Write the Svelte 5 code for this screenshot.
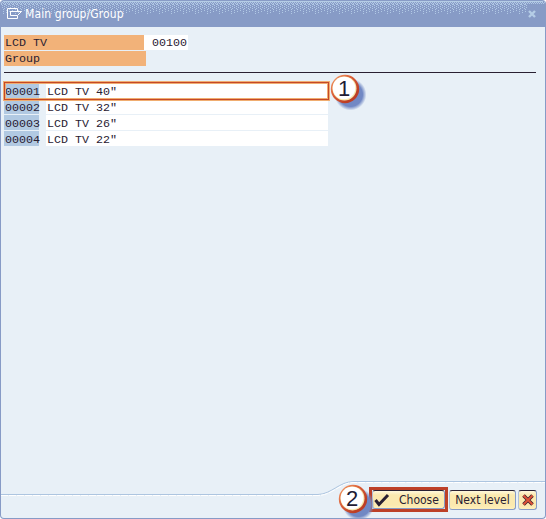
<script>
  const rows = [
    ['00001', 'LCD TV 40"'],
    ['00002', 'LCD TV 32"'],
    ['00003', 'LCD TV 26"'],
    ['00004', 'LCD TV 22"']
  ];
  // Ordered-dither texture of the title bar: [y, step, offset]
  const dither = [[2,2,0],[3,2,1],[4,4,0],[4,4,1],[5,4,2],[6,4,0],[7,4,2],[8,4,0],[9,6,3],[10,6,0],[11,6,3],[12,12,6],[13,12,3]];
  let dots = '';
  for (const [y, step, off] of dither) {
    for (let x = off; x < 12; x += step) dots += `M${x} ${y}h1v1h-1z`;
  }
</script>

{#snippet badge(n)}
  <svg width="38" height="38" viewBox="0 0 38 38">
    <defs>
      <radialGradient id="shade{n}">
        <stop offset=".75" stop-color="#7188c4" /><stop offset="1" stop-color="#7188c4" stop-opacity="0" />
      </radialGradient>
      <linearGradient id="rim{n}" x1="0" y1="0" x2="1" y2="1">
        <stop offset="0" stop-color="#f5ac78" /><stop offset=".35" stop-color="#de643c" /><stop offset=".75" stop-color="#bd3e25" />
      </linearGradient>
    </defs>
    <circle cx="20.5" cy="20.5" r="16" fill="url(#shade{n})" />
    <circle cx="15" cy="15" r="14.2" fill="url(#rim{n})" />
    <circle cx="14.5" cy="14.5" r="12" fill="#f8e8ad" />
    <circle cx="14" cy="14" r="11.3" fill="#fff" />
    <text x="14" y="22" text-anchor="middle">{n}</text>
  </svg>
{/snippet}

<main>
  <header>
    <svg class="texture" width="546" height="27">
      <defs><pattern id="dither" width="12" height="27" patternUnits="userSpaceOnUse"><path d={dots} fill="#b1c9e5" shape-rendering="crispEdges" /></pattern></defs>
      <rect width="528" height="27" fill="url(#dither)" />
      <rect x="528" width="18" height="4" fill="url(#dither)" />
      <path d="M3 1.5H543" stroke="#b5cde6" />
    </svg>
    <svg class="exit" width="15" height="12" viewBox="0 0 15 12" fill="none" stroke="#fff">
      <path d="M10.5 3V.5H.5V10.5H10.5V8M3 3.5H14.5L10.5 7.5H3.5V3.5" />
    </svg>
    <h1>Main group/Group</h1>
    <svg class="close" width="8" height="8" viewBox="0 0 8 8"><path d="M1 1L7 7M7 1L1 7" stroke="#b5cde6" stroke-width="2.4" /></svg>
  </header>
  <section class="info">
    <div class="line"><span class="label">LCD TV</span><span class="value">00100</span></div>
    <div class="line"><span class="label wide">Group</span></div>
  </section>
  <hr />
  <section class="list">
    {#each rows as [code, name]}
      <div class="row"><span class="code">{code}</span><span class="name">{name}</span></div>
    {/each}
    <div class="selected"></div>
    <div class="badge one">{@render badge(1)}</div>
  </section>
  <footer>
    <svg class="curve" width="544" height="18" viewBox="1 479 544 18" fill="none">
      <path d="M1 494.5H318C332 494 339 481.5 354 481.5H545" stroke="#adc5e0" />
      <path d="M1 495.5H318C333 495 340 482.5 354 482.5H545" stroke="#fff" stroke-dasharray="7 1" />
    </svg>
    <div class="buttons">
      <div class="frame"><button class="choose"><svg width="16" height="14" viewBox="0 0 16 14"><path d="M1.5 7L5 11.5L14 2" fill="none" stroke="#292032" stroke-width="3" /></svg><span>Choose</span></button></div>
      <button class="next">Next level</button>
      <button class="cancel" aria-label="Cancel"><svg width="12" height="12" viewBox="0 0 12 12"><path d="M1.5 1.5L10.5 10.5M10.5 1.5L1.5 10.5" stroke="#42202c" stroke-width="3.6" /><path d="M1.5 1.5L10.5 10.5M10.5 1.5L1.5 10.5" stroke="#df5438" stroke-width="2" /></svg></button>
      <div class="badge two">{@render badge(2)}</div>
    </div>
  </footer>
</main>

<style>
  main { position: relative; box-sizing: border-box; width: 546px; height: 519px; display: flex; flex-direction: column; background: #e8f0f7; border: solid #879bc6; border-width: 0 1px 1px; border-radius: 4px; overflow: hidden; color: #292032; font-family: "DejaVu Sans Condensed", "DejaVu Sans", sans-serif; }
  header { position: relative; height: 27px; flex: none; background: #879bc6; display: flex; align-items: center; padding: 0 9px 0 6px; }
  .texture { position: absolute; left: -1px; top: 0; }
  .exit, h1, .close { position: relative; }
  h1 { margin: 0 auto 0 3px; font: 12px/16px "DejaVu Sans Condensed", sans-serif; color: #fff; white-space: nowrap; letter-spacing: .1px; }
  .info { padding: 8px 0 0 3px; }
  .line { display: flex; height: 15px; margin-bottom: 1px; }
  .line, .row { font: 11.67px/17px "Liberation Mono", monospace; white-space: pre; }
  .row { line-height: 18px; }
  .label { width: 140px; background: #f2b279; box-sizing: border-box; padding-left: 1px; }
  .wide { width: 142px; }
  .value { width: 44px; box-sizing: border-box; padding-left: 8px; background: #fff; }
  hr { width: 532px; height: 1px; flex: none; border: 0; background: #292032; margin: 5px 0 10px 3px; }
  .list { position: relative; padding-left: 3px; }
  .row { display: flex; gap: 7px; height: 15px; margin-bottom: 1px; }
  .code { width: 35px; box-sizing: border-box; padding-left: 1px; background: #b1c9e2; }
  .name { width: 282px; box-sizing: border-box; padding-left: 1px; background: #fff; }
  .selected { position: absolute; box-sizing: border-box; left: 2px; top: -2px; width: 327px; height: 20px; border: 1px solid #f0ad70; box-shadow: inset 0 0 0 1px #c54828, inset 0 0 0 2px #f0ad70; }
  .badge { position: absolute; width: 38px; height: 38px; }
  .badge svg { display: block; }
  .badge text { font: 22px "Liberation Sans", sans-serif; fill: #211c35; }
  .one { left: 329px; top: -9px; }
  .two { left: -31px; top: -3px; }
  footer { margin-top: auto; height: 39px; position: relative; display: flex; justify-content: flex-end; }
  .curve { position: absolute; left: 0; top: 0; }
  .buttons { position: relative; display: flex; margin: 8px 8px 0 0; align-items: flex-start; }
  .frame { width: 79px; height: 25px; box-sizing: border-box; border: 3px solid #bd4028; }
  button { box-sizing: border-box; height: 20px; padding: 0; border: 1px solid; border-color: #292032 #879bc6 #879bc6 #b1c0d8; border-radius: 3px; background: linear-gradient(#fff8dd 0, #fbe9af 4px, #fbe9af 14px, #fff0bb); color: #292032; font: 12px/17px "DejaVu Sans Condensed", sans-serif; display: flex; align-items: center; justify-content: center; white-space: nowrap; }
  .choose { width: 73px; height: 19px; justify-content: flex-start; padding-left: 1px; }
  .choose span { margin: 2px 0 0 9px; }
  .next { width: 67px; margin: 3px 2px 0 1px; padding-top: 1px; letter-spacing: .05px; }
  .cancel { width: 19px; margin-top: 3px; }
</style>
